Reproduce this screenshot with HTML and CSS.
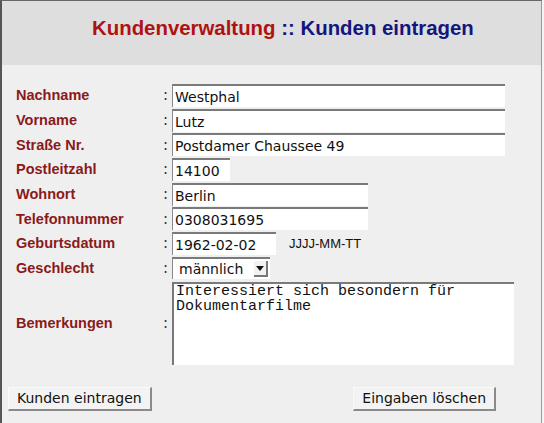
FILE: index.html
```html
<!DOCTYPE html>
<html lang="de">
<head>
  <meta charset="UTF-8">
  <title>Kundenverwaltung :: Kunden eintragen</title>
  <link rel="stylesheet" href="styles.css">
</head>
<body>
  <div class="frame">
    <div class="head">
      <h1><span class="app">Kundenverwaltung</span> <span class="page">:: Kunden eintragen</span></h1>
    </div>
    <form class="form">
      <div class="row">
        <label>Nachname</label><span class="colon">:</span>
        <input type="text" class="wide" value="Westphal">
      </div>
      <div class="row">
        <label>Vorname</label><span class="colon">:</span>
        <input type="text" class="wide" value="Lutz">
      </div>
      <div class="row">
        <label>Straße Nr.</label><span class="colon">:</span>
        <input type="text" class="wide" value="Postdamer Chaussee 49">
      </div>
      <div class="row">
        <label>Postleitzahl</label><span class="colon">:</span>
        <input type="text" class="plz" value="14100">
      </div>
      <div class="row">
        <label>Wohnort</label><span class="colon">:</span>
        <input type="text" class="mid" value="Berlin">
      </div>
      <div class="row">
        <label>Telefonnummer</label><span class="colon">:</span>
        <input type="text" class="mid" value="0308031695">
      </div>
      <div class="row">
        <label>Geburtsdatum</label><span class="colon">:</span>
        <input type="text" class="date" value="1962-02-02">
        <span class="hint">JJJJ-MM-TT</span>
      </div>
      <div class="row">
        <label>Geschlecht</label><span class="colon">:</span>
        <div class="select">
          <span class="value">männlich</span>
          <span class="arrow"></span>
        </div>
      </div>
      <div class="row tall">
        <label>Bemerkungen</label><span class="colon">:</span>
        <textarea>Interessiert sich besondern für
Dokumentarfilme</textarea>
      </div>
      <div class="buttons">
        <button type="submit">Kunden eintragen</button>
        <button type="reset">Eingaben löschen</button>
      </div>
    </form>
  </div>
</body>
</html>
```

FILE: styles.css
```css
body {
  margin: 0;
  background: #f4f4f4;
  font-family: 'DejaVu Sans', 'Liberation Sans', sans-serif;
}
.frame {
  width: 539px;
  height: 422px;
  border-top: 1px solid #666;
  border-left: 2px solid #555;
  border-right: 1px solid #999;
  background: #efefef;
}
.head {
  height: 64px;
  background: #dedede;
  display: flex;
  align-items: center;
  padding-left: 90px;
}
.head h1 {
  margin: 0 0 10px;
  font-family: 'Liberation Sans', Arial, sans-serif;
  font-size: 20.4px;
  font-weight: bold;
}
.app { color: #b01212; }
.page { color: #15157e; }
.form {
  padding: 18px 0 0 14px;
}
.row {
  display: flex;
  align-items: center;
  height: 24.7px;
}
.row label {
  width: 147px;
  color: #8a1a1a;
  font-family: 'Liberation Sans', Arial, sans-serif;
  font-weight: bold;
  font-size: 14.5px;
}
.colon {
  width: 9px;
  font-size: 15px;
  color: #333;
}
.row input {
  height: 23px;
  box-sizing: border-box;
  margin: 0;
  padding: 1px 2px 0;
  background: #fff;
  border: 0;
  border-top: 2px solid #7a7a7a;
  border-left: 1px solid #8a8a8a;
  font-family: 'DejaVu Sans', sans-serif;
  font-size: 14px;
  color: #111;
}
.wide { width: 333px; }
.mid { width: 196px; }
.plz { width: 58px; }
.date { width: 104px; }
.hint {
  margin-left: 13px;
  font-family: 'Liberation Sans', Arial, sans-serif;
  font-size: 13px;
  color: #111;
}
.select {
  position: relative;
  width: 98px;
  height: 22px;
  box-sizing: border-box;
  border-top: 2px solid #7a7a7a;
  border-left: 1px solid #8a8a8a;
  background: #fff;
  display: flex;
  align-items: center;
}
.select .value {
  padding-left: 6px;
  font-size: 14px;
  color: #111;
}
.select .arrow {
  position: absolute;
  right: 2px;
  top: 2px;
  width: 12px;
  height: 14px;
  background: #f2f2f2;
  border-right: 2px solid #777;
  border-bottom: 2px solid #777;
}
.select .arrow::after {
  content: "";
  position: absolute;
  left: 2px;
  top: 5px;
  border-left: 4px solid transparent;
  border-right: 4px solid transparent;
  border-top: 5px solid #111;
}
.row.tall {
  height: 83px;
  margin-top: 1px;
}
.row textarea {
  width: 342px;
  height: 83px;
  box-sizing: border-box;
  margin: 0;
  padding: 0 2px;
  resize: none;
  border: 0;
  border-top: 2px solid #7a7a7a;
  border-left: 2px solid #777;
  background: #fff;
  font-family: 'Liberation Mono', 'Courier New', monospace;
  font-size: 15px;
  line-height: 15px;
  color: #111;
}
.buttons {
  display: flex;
  justify-content: space-between;
  width: 488px;
  margin: 22px 0 0 -8px;
}
.buttons button {
  height: 24px;
  padding: 0 8px;
  background: #f3f3f3;
  border: 0;
  border-top: 1px solid #fafafa;
  border-left: 1px solid #fafafa;
  border-right: 2px solid #8a8a8a;
  border-bottom: 2px solid #8a8a8a;
  font-family: 'DejaVu Sans', sans-serif;
  font-size: 14px;
  color: #111;
}
```
